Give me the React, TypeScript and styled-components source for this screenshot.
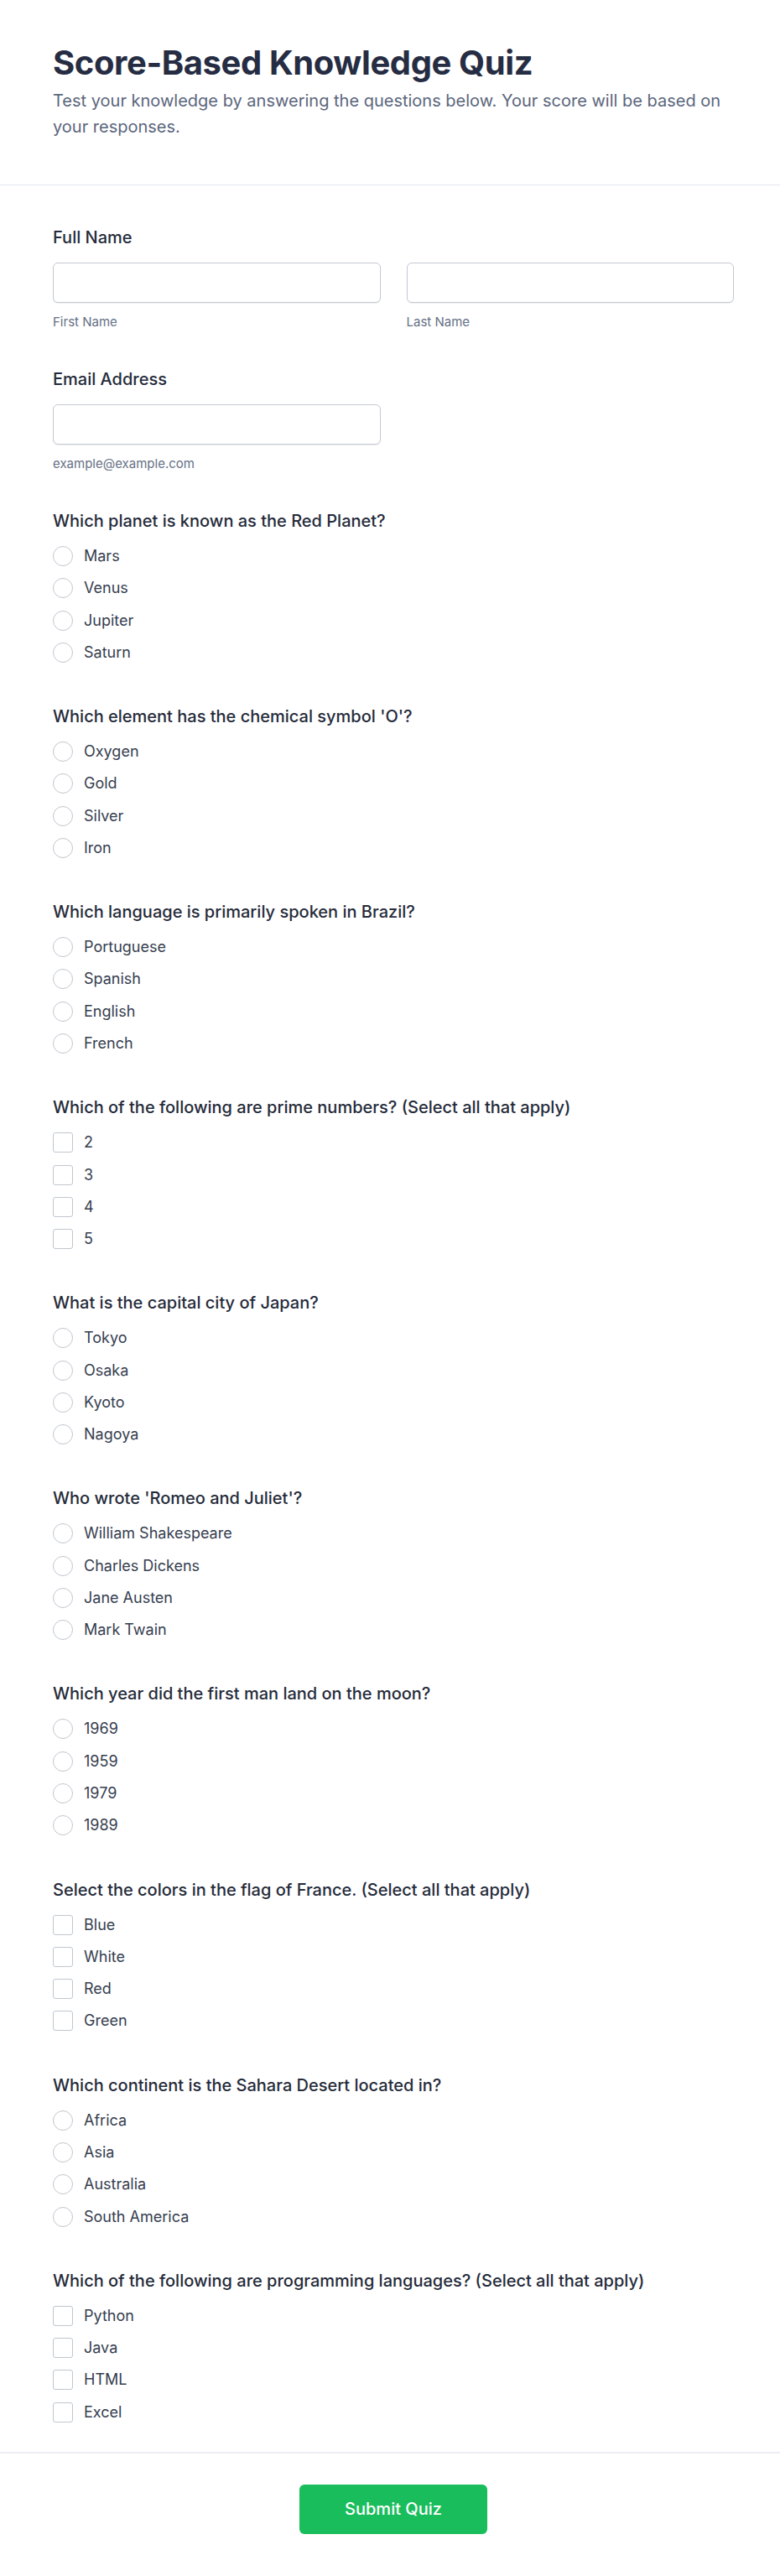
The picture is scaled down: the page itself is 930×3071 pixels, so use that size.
import React, { useState } from 'react';
import styled, { createGlobalStyle } from 'styled-components';

type Question = {
  id: string;
  text: string;
  type: 'radio' | 'checkbox';
  options: string[];
};

const questions: Question[] = [
  { id: 'q1', text: 'Which planet is known as the Red Planet?', type: 'radio', options: ['Mars', 'Venus', 'Jupiter', 'Saturn'] },
  { id: 'q2', text: "Which element has the chemical symbol 'O'?", type: 'radio', options: ['Oxygen', 'Gold', 'Silver', 'Iron'] },
  { id: 'q3', text: 'Which language is primarily spoken in Brazil?', type: 'radio', options: ['Portuguese', 'Spanish', 'English', 'French'] },
  { id: 'q4', text: 'Which of the following are prime numbers? (Select all that apply)', type: 'checkbox', options: ['2', '3', '4', '5'] },
  { id: 'q5', text: 'What is the capital city of Japan?', type: 'radio', options: ['Tokyo', 'Osaka', 'Kyoto', 'Nagoya'] },
  { id: 'q6', text: "Who wrote 'Romeo and Juliet'?", type: 'radio', options: ['William Shakespeare', 'Charles Dickens', 'Jane Austen', 'Mark Twain'] },
  { id: 'q7', text: 'Which year did the first man land on the moon?', type: 'radio', options: ['1969', '1959', '1979', '1989'] },
  { id: 'q8', text: 'Select the colors in the flag of France. (Select all that apply)', type: 'checkbox', options: ['Blue', 'White', 'Red', 'Green'] },
  { id: 'q9', text: 'Which continent is the Sahara Desert located in?', type: 'radio', options: ['Africa', 'Asia', 'Australia', 'South America'] },
  { id: 'q10', text: 'Which of the following are programming languages? (Select all that apply)', type: 'checkbox', options: ['Python', 'Java', 'HTML', 'Excel'] },
];

export default function App() {
  const [answers, setAnswers] = useState<Record<string, string[]>>({});

  const toggle = (q: Question, option: string) => {
    setAnswers(prev => {
      const current = prev[q.id] || [];
      if (q.type === 'radio') return { ...prev, [q.id]: [option] };
      const next = current.includes(option)
        ? current.filter(o => o !== option)
        : [...current, option];
      return { ...prev, [q.id]: next };
    });
  };

  return (
    <>
      <GlobalStyle />
      <Page>
        <Header>
          <Title>Score-Based Knowledge Quiz</Title>
          <Subtitle>
            Test your knowledge by answering the questions below. Your score will be based on your responses.
          </Subtitle>
        </Header>

        <Body>
          <FieldGroup>
            <Label>Full Name</Label>
            <NameRow>
              <div>
                <Input type="text" />
                <SubLabel>First Name</SubLabel>
              </div>
              <div>
                <Input type="text" />
                <SubLabel>Last Name</SubLabel>
              </div>
            </NameRow>
          </FieldGroup>

          <FieldGroup>
            <Label>Email Address</Label>
            <NameRow>
              <div>
                <Input type="email" />
                <SubLabel>example@example.com</SubLabel>
              </div>
            </NameRow>
          </FieldGroup>

          {questions.map(q => (
            <QuestionGroup key={q.id}>
              <Label>{q.text}</Label>
              <OptionList>
                {q.options.map(option => (
                  <OptionRow key={option}>
                    <Choice
                      type={q.type}
                      name={q.id}
                      $round={q.type === 'radio'}
                      checked={(answers[q.id] || []).includes(option)}
                      onChange={() => toggle(q, option)}
                    />
                    <OptionText>{option}</OptionText>
                  </OptionRow>
                ))}
              </OptionList>
            </QuestionGroup>
          ))}
        </Body>

        <Footer>
          <SubmitButton type="button">Submit Quiz</SubmitButton>
        </Footer>
      </Page>
    </>
  );
}

const GlobalStyle = createGlobalStyle`
  * { box-sizing: border-box; }
  body {
    margin: 0;
    background: #ffffff;
    font-family: Inter, "Noto Sans", "Liberation Sans", sans-serif;
  }
`;

const Page = styled.div`
  background: #ffffff;
  min-height: 3071px;
`;

const Header = styled.header`
  padding: 51px 55px 53px 63px;
  border-bottom: 1px solid #e2e6ee;
`;

const Title = styled.h1`
  margin: 0;
  font-size: 40px;
  line-height: 48px;
  font-weight: 700;
  color: #262d43;
  letter-spacing: -0.01em;
`;

const Subtitle = styled.p`
  margin: 6px 0 0;
  font-size: 20px;
  line-height: 31px;
  color: #5b667c;
`;

const Body = styled.div`
  padding: 48px 55px 33px 63px;
`;

const FieldGroup = styled.div`
  margin-bottom: 44px;
`;

const QuestionGroup = styled.div`
  margin-bottom: 48.2px;

  &:last-child {
    margin-bottom: 0;
  }
`;

const Label = styled.div`
  font-size: 20px;
  line-height: 28px;
  font-weight: 500;
  color: #252b3a;
  margin-bottom: 16px;
`;

const NameRow = styled.div`
  display: grid;
  grid-template-columns: 1fr 1fr;
  gap: 31px;
`;

const Input = styled.input`
  display: block;
  width: 100%;
  height: 48px;
  padding: 0 14px;
  border: 1px solid #c4c9d3;
  border-radius: 6px;
  background: #ffffff;
  box-shadow: 0 1px 1px rgba(0, 0, 0, 0.07);
  font-size: 18px;
  font-family: inherit;
  outline: none;

  &:focus {
    border-color: #1cbd5c;
  }
`;

const SubLabel = styled.div`
  margin-top: 13px;
  font-size: 15px;
  line-height: 20px;
  color: #667085;
`;

const OptionList = styled.div`
  display: flex;
  flex-direction: column;
  gap: 10.3px;
  margin-top: -2px;
`;

const OptionRow = styled.label`
  display: flex;
  align-items: center;
  gap: 13px;
  min-height: 28px;
  cursor: pointer;
`;

const Choice = styled.input<{ $round: boolean }>`
  appearance: none;
  margin: 0;
  flex: none;
  width: 24px;
  height: 24px;
  border: 1.5px solid #c0c6cf;
  border-radius: ${p => (p.$round ? '50%' : '3px')};
  background: #ffffff;
  cursor: pointer;

  &:checked {
    border-color: #1cbd5c;
    background: ${p => (p.$round
      ? 'radial-gradient(circle, #1cbd5c 0 5px, #ffffff 6px)'
      : '#1cbd5c')};
  }
`;

const OptionText = styled.span`
  font-size: 18px;
  line-height: 28px;
  color: #363e4f;
`;

const Footer = styled.footer`
  border-top: 2px solid #eceef3;
  padding: 37px 55px 49px 63px;
  display: flex;
  justify-content: center;
`;

const SubmitButton = styled.button`
  height: 59px;
  padding: 0 54px;
  border: none;
  border-radius: 6px;
  background: #1abd5b;
  color: #ffffff;
  font-family: inherit;
  font-size: 20px;
  font-weight: 500;
  cursor: pointer;

  &:hover {
    background: #17a851;
  }
`;
